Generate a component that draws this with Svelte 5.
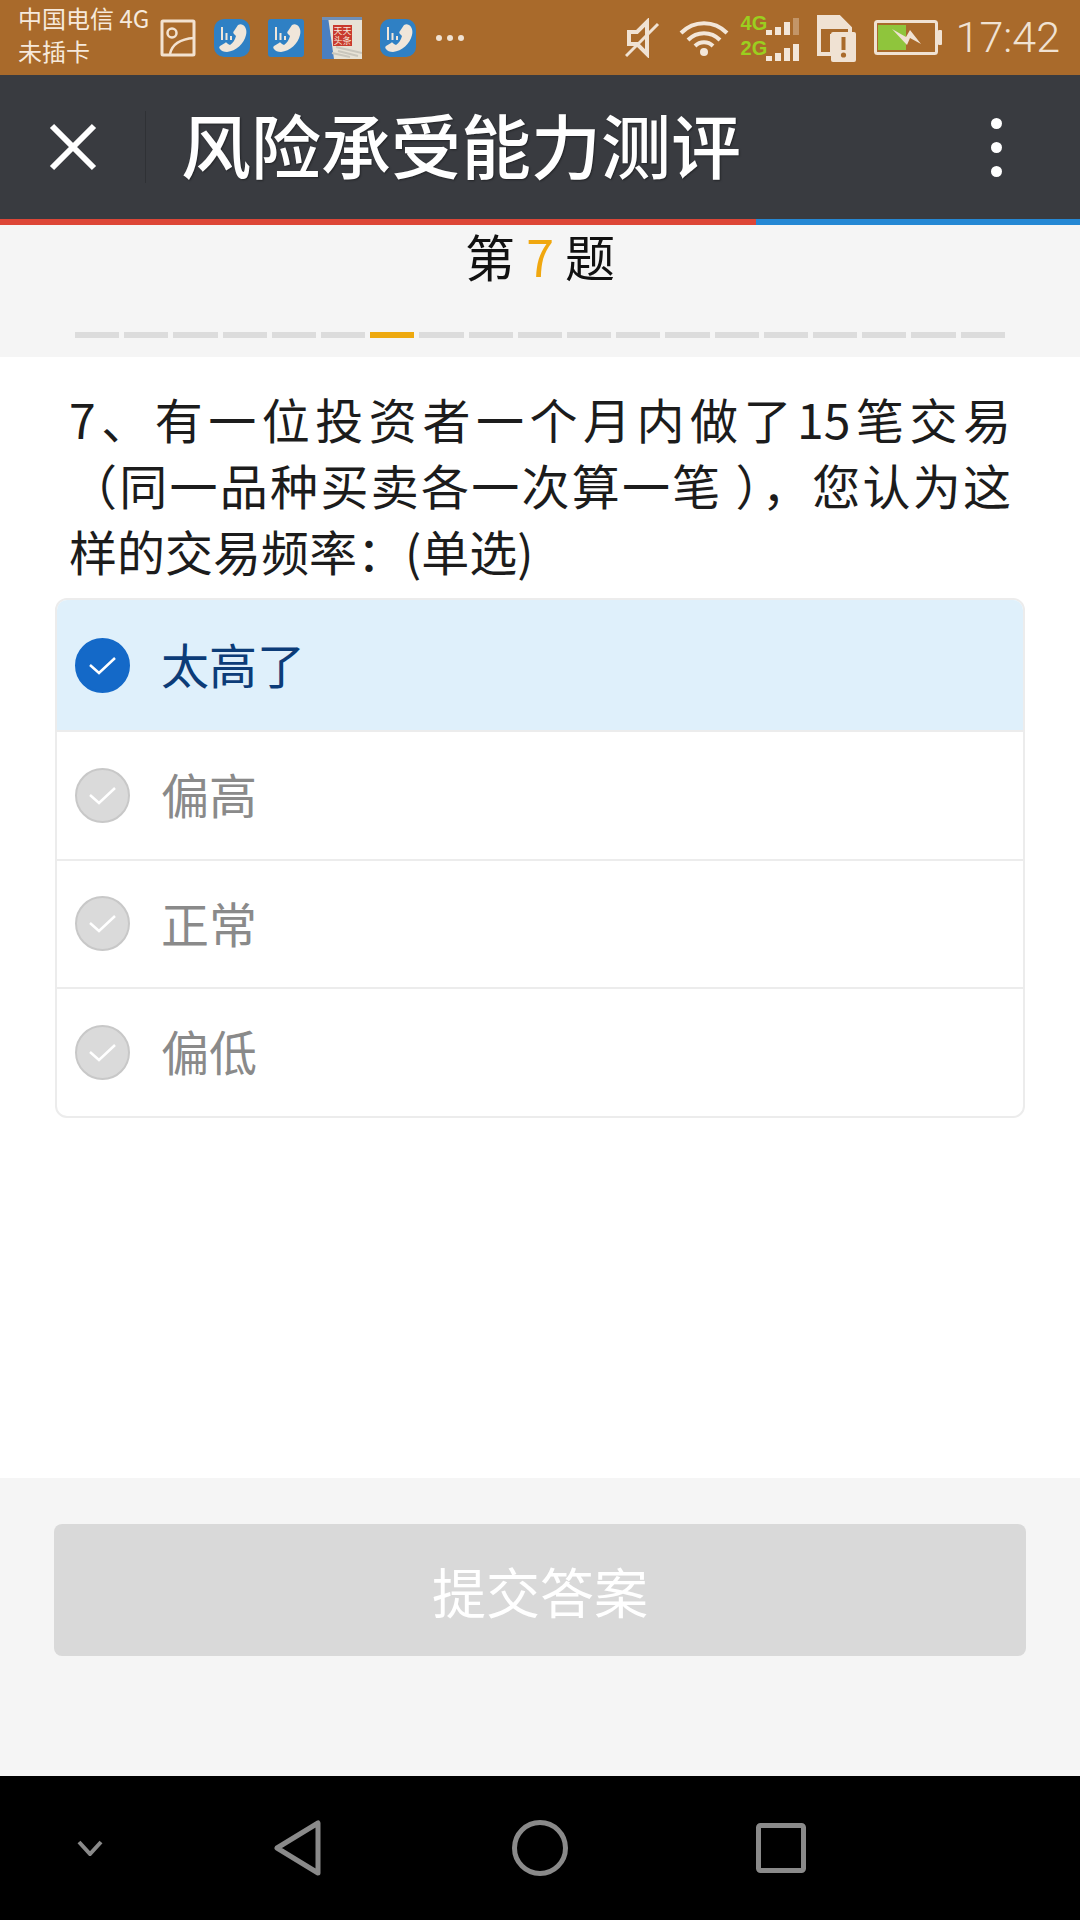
<script lang="ts">
	const options = [
		{ label: '太高了', selected: true },
		{ label: '偏高', selected: false },
		{ label: '正常', selected: false },
		{ label: '偏低', selected: false }
	];
	const steps = Array.from({ length: 19 }, (_, i) => i === 6);
	const appCorners = [10, 3, 10];
</script>

{#snippet phoneApp(corner: number)}
	<svg class="ic-app" width="36" height="38" viewBox="0 0 36 38">
		<rect width="36" height="38" rx={corner} fill="#2f80c4" />
		<path d="M24 6c2-1 3-1 5 0 3 2 4 6 3 10-2 9-10 16-19 17-3 0-6-1-7-3-1-1-1-2 0-3l5-3c1-1 2 0 3 1l2 1c3-2 5-5 6-9l-2-2c-1-1-1-2 0-3z" fill="#f0e6da" />
		<path d="M8 8v13M12.500 14v7M17 17v4" stroke="#f0e6da" stroke-width="2" />
	</svg>
{/snippet}

<div class="page">
	<div class="status">
		<div class="carrier">
			<span>中国电信 4G</span>
			<span>未插卡</span>
		</div>
		<svg class="ic-pic" width="36" height="38" viewBox="0 0 36 38">
			<rect x="2" y="2" width="32" height="34" rx="1" fill="none" stroke="#f3e2d0" stroke-width="3" />
			<circle cx="12" cy="14" r="4.500" fill="none" stroke="#f3e2d0" stroke-width="2.500" />
			<path d="M10 35c2-10 10-15 24-16" fill="none" stroke="#f3e2d0" stroke-width="2.500" />
		</svg>
		{@render phoneApp(appCorners[0])}
		{@render phoneApp(appCorners[1])}
		<svg class="ic-app" width="40" height="42" viewBox="0 0 40 42">
			<rect width="40" height="42" fill="#e7e2d6" />
			<path d="M0 0h6l6 42H0z" fill="#4a7fc0" />
			<path d="M0 0h40v3H0z" fill="#6f8fb8" />
			<path d="M14 30l26 6M16 34l20 5M10 36l18 4" stroke="#c9c6bc" stroke-width="2" />
			<rect x="11" y="8" width="19" height="21" fill="#c93a2e" />
			<text class="stamp" x="20.500" y="17" text-anchor="middle">天天</text>
			<text class="stamp" x="20.500" y="27" text-anchor="middle">头条</text>
		</svg>
		{@render phoneApp(appCorners[2])}
		<div class="more"><i></i><i></i><i></i></div>

		<div class="spacer"></div>

		<svg width="38" height="40" viewBox="0 0 38 40">
			<path d="M4 14h8L22 4v32L12 26H4z" fill="none" stroke="#f0e2d3" stroke-width="4" />
			<path d="M1 38L33 6" stroke="#f0e2d3" stroke-width="3" />
		</svg>
		<svg class="ic-wifi" width="50" height="38" viewBox="0 0 50 38">
			<g fill="none" stroke="#f3e6d8" stroke-width="4">
				<path d="M2 14c13-13 33-13 46 0" />
				<path d="M9 21c9-9 23-9 32 0" />
				<path d="M16 27c5-5 13-5 18 0" />
			</g>
			<circle cx="25" cy="33" r="4" fill="#f3e6d8" />
		</svg>
		<div class="sim-bars">
			<span class="net n4">4G</span>
			<span class="net n2">2G</span>
			<div class="bars b4"><i class="h1"></i><i class="h2"></i><i class="h3"></i><i class="h4 dim"></i></div>
			<div class="bars b2"><i class="h1"></i><i class="h2"></i><i class="h3"></i><i class="h4"></i></div>
		</div>
		<svg class="ic-sim" width="40" height="48" viewBox="0 0 40 48">
			<path d="M3 3h20l11 11v8H16v18H3z" fill="none" stroke="#f0e2d3" stroke-width="4" />
			<path d="M3 1h20l11 11v3H3z" fill="#f0e2d3" />
			<rect x="15" y="18" width="25" height="30" rx="2" fill="#f0e2d3" />
			<path d="M27.500 23v13" stroke="#a96a2b" stroke-width="4" />
			<circle cx="27.500" cy="41" r="2.600" fill="#a96a2b" />
		</svg>
		<svg class="ic-batt" width="68" height="36" viewBox="0 0 68 36">
			<rect x="1.500" y="1.500" width="61" height="32" rx="2" fill="none" stroke="#f0e2d3" stroke-width="3" />
			<rect x="4" y="5" width="28" height="25" fill="#8fc53c" />
			<rect x="64" y="10" width="4" height="15" rx="1" fill="#f0e2d3" />
			<path d="M18 9l14 8 4-7 11 14-11-6-3 7z" fill="#f0e2d3" />
		</svg>
		<span class="clock">17:42</span>
	</div>

	<header class="bar">
		<svg class="close" width="48" height="48" viewBox="0 0 48 48">
			<path d="M3 3l42 42M45 3L3 45" stroke="#fff" stroke-width="6" fill="none" />
		</svg>
		<div class="divider"></div>
		<h1>风险承受能力测评</h1>
		<div class="menu"><i></i><i></i><i></i></div>
	</header>
	<div class="loadline"><div class="red"></div></div>

	<section class="head">
		<div class="qno">第 <em>7</em> 题</div>
		<div class="steps">
			{#each steps as on}
				<i class:on></i>
			{/each}
		</div>
	</section>

	<main class="body">
		<p class="question">
			<span class="fill">7、有一位投资者一个月内做了15笔交易</span>
			<span class="fill">（同一品种买卖各一次算一笔 ），您认为这</span>
			<span>样的交易频率：(单选)</span>
		</p>
		<div class="options">
			{#each options as o}
				<div class="option" class:selected={o.selected}>
					<span class="radio">
						<svg width="29" height="21" viewBox="0 0 29 21">
							<path d="M2 10l9 8L27 3" fill="none" stroke="#fff" stroke-width="2.500" />
						</svg>
					</span>
					<span class="label">{o.label}</span>
				</div>
			{/each}
		</div>
	</main>

	<footer class="foot">
		<button class="submit">提交答案</button>
	</footer>

	<nav class="nav">
		<svg class="n-down" width="26" height="16" viewBox="0 0 26 16">
			<path d="M2 2l11 12L24 2" fill="none" stroke="#8a8a8a" stroke-width="4" />
		</svg>
		<svg class="n-back" width="48" height="56" viewBox="0 0 48 56">
			<path d="M44 3v50L3 28z" fill="none" stroke="#8a8a8a" stroke-width="5" stroke-linejoin="round" />
		</svg>
		<svg class="n-home" width="56" height="56" viewBox="0 0 56 56">
			<circle cx="28" cy="28" r="25.500" fill="none" stroke="#8a8a8a" stroke-width="5" />
		</svg>
		<svg class="n-recent" width="50" height="50" viewBox="0 0 50 50">
			<rect x="2.500" y="2.500" width="45" height="45" rx="2" fill="none" stroke="#8a8a8a" stroke-width="5" />
		</svg>
	</nav>
</div>

<style>
	:global(body) {
		margin: 0;
		background: #fff;
	}

	.page {
		width: 1080px;
		height: 1920px;
		display: flex;
		flex-direction: column;
		font-family: 'Noto Sans CJK SC', 'Noto Sans', sans-serif;
		overflow: hidden;
	}

	.status {
		height: 75px;
		flex: none;
		box-sizing: border-box;
		display: flex;
		align-items: center;
		padding: 0 20px 0 18px;
		background: #a96a2b;
		color: #f6e9dc;
	}

	.carrier {
		width: 142px;
		display: flex;
		flex-direction: column;
		padding-bottom: 8px;
		font-size: 24px;
		line-height: 33px;
		white-space: nowrap;
	}

	.ic-app {
		margin-left: 18px;
	}

	.stamp {
		font-size: 9px;
		fill: #f6e9dc;
	}

	.more {
		display: flex;
		gap: 5px;
		margin-left: 20px;
	}

	.more i {
		width: 6px;
		height: 6px;
		border-radius: 50%;
		background: #f0e2d3;
	}

	.spacer {
		flex: 1;
	}

	.ic-wifi {
		margin-left: 16px;
	}

	.sim-bars {
		position: relative;
		width: 62px;
		height: 50px;
		margin-left: 10px;
	}

	.net {
		position: absolute;
		left: 2px;
		font: 700 20px/20px 'Liberation Sans', sans-serif;
		color: #9bcf1f;
	}

	.n4 {
		top: 0;
	}

	.n2 {
		top: 25px;
	}

	.bars {
		position: absolute;
		left: 27px;
		display: flex;
		align-items: flex-end;
		gap: 3px;
		height: 17px;
	}

	.b4 {
		top: 5px;
	}

	.b2 {
		top: 31px;
	}

	.bars i {
		width: 6px;
		background: #f3e6d8;
	}

	.bars .h1 {
		height: 5px;
	}

	.bars .h2 {
		height: 8px;
	}

	.bars .h3 {
		height: 13px;
	}

	.bars .h4 {
		height: 17px;
	}

	.bars .dim {
		opacity: 0.35;
	}

	.ic-sim {
		margin-left: 15px;
	}

	.ic-batt {
		margin-left: 18px;
	}

	.clock {
		margin-left: 14px;
		font: 300 43px/1 Roboto, sans-serif;
		color: #f0e2d3;
	}

	.bar {
		height: 144px;
		flex: none;
		display: flex;
		align-items: center;
		background: #393b40;
		color: #fff;
	}

	.close {
		margin-left: 49px;
	}

	.divider {
		width: 1px;
		height: 72px;
		margin-left: 48px;
		background: #2f3135;
	}

	h1 {
		flex: 1;
		margin: 0 0 6px 35px;
		font-size: 70px;
		font-weight: 500;
		line-height: 1;
		text-shadow: 1px 1px 2px rgba(0, 0, 0, 0.4);
	}

	.menu {
		display: flex;
		flex-direction: column;
		gap: 13px;
		margin-right: 78px;
	}

	.menu i {
		width: 11px;
		height: 11px;
		border-radius: 50%;
		background: #fff;
	}

	.loadline {
		height: 6px;
		flex: none;
		background: #2588d4;
	}

	.red {
		width: 756px;
		height: 100%;
		background: #dd4637;
	}

	.head {
		height: 132px;
		flex: none;
		box-sizing: border-box;
		padding: 0 75px;
		background: #f5f5f5;
		display: flex;
		flex-direction: column;
		align-items: center;
	}

	.qno {
		height: 107px;
		font-size: 50px;
		line-height: 60px;
		color: #111;
	}

	.qno em {
		font-style: normal;
		color: #f0a70f;
	}

	.steps {
		align-self: stretch;
		display: flex;
		gap: 5px;
	}

	.steps i {
		flex: 1;
		height: 6px;
		background: #dcdcdc;
	}

	.steps i.on {
		background: #eea90f;
	}

	.body {
		flex: 1;
		background: #fff;
		padding: 28px 55px 0;
	}

	.question {
		margin: 0 14px 15px;
		font-size: 48px;
		line-height: 66px;
		color: #1c1c1c;
	}

	.question span {
		display: block;
	}

	.question .fill {
		text-align: justify;
		text-align-last: justify;
	}

	.options {
		border: 2px solid #ececec;
		border-radius: 12px;
		overflow: hidden;
	}

	.option {
		height: 128.600px;
		box-sizing: border-box;
		display: flex;
		align-items: center;
		padding-left: 18px;
		border-top: 2px solid #ececec;
		color: #8a8a8a;
	}

	.option:first-child {
		height: 130px;
		border-top: 0;
	}

	.option.selected {
		background: #dff0fb;
		color: #0c3c78;
	}

	.radio {
		width: 55px;
		height: 55px;
		box-sizing: border-box;
		border: 2px solid #c8c8c8;
		border-radius: 50%;
		background: #dadada;
		display: flex;
		align-items: center;
		justify-content: center;
	}

	.selected .radio {
		border-color: #1469c8;
		background: #1469c8;
	}

	.label {
		margin: 0 0 4px 31px;
		font-size: 48px;
		line-height: 1;
	}

	.foot {
		height: 298px;
		flex: none;
		box-sizing: border-box;
		padding: 46px 54px 0;
		background: #f5f5f5;
	}

	.submit {
		display: block;
		width: 100%;
		height: 132px;
		border: 0;
		border-radius: 8px;
		background: #d9d9d9;
		color: #fff;
		font-family: inherit;
		font-size: 54px;
	}

	.nav {
		height: 144px;
		flex: none;
		background: #000;
		display: flex;
		align-items: center;
	}

	.n-down {
		margin-left: 77px;
	}

	.n-back {
		margin-left: 171px;
	}

	.n-home {
		margin-left: 190px;
	}

	.n-recent {
		margin-left: 188px;
	}
</style>
